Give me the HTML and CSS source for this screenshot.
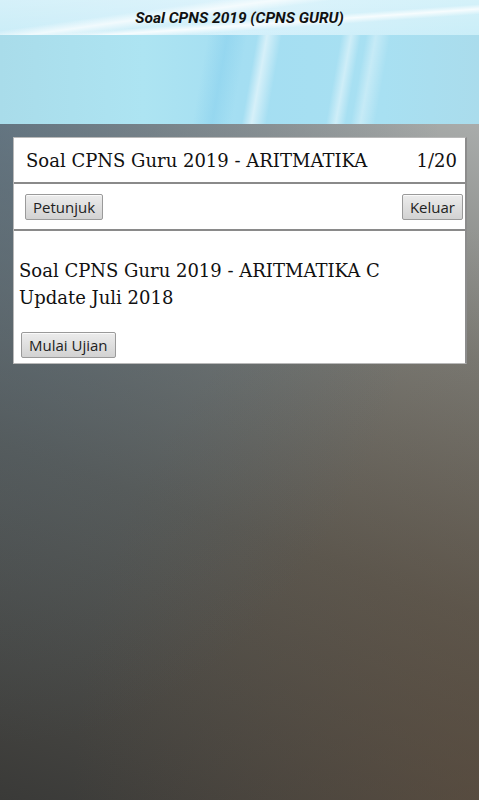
FILE: index.html
```html
<!DOCTYPE html>
<html lang="id">
<head>
  <meta charset="UTF-8" />
  <meta name="viewport" content="width=device-width, initial-scale=1.0"/>
  <title>Soal CPNS 2019 (CPNS GURU)</title>
  <link rel="stylesheet" href="styles.css">
</head>
<body>

  <div class="titlebar">
    <h1>Soal CPNS 2019 (CPNS GURU)</h1>
  </div>

  <div class="banner"></div>

  <div class="content">
    <div class="quiz-card">
      <div class="quiz-head">
        <span class="quiz-title">Soal CPNS Guru 2019 - ARITMATIKA</span>
        <span class="quiz-count">1/20</span>
      </div>

      <div class="quiz-tools">
        <button class="btn">Petunjuk</button>
        <button class="btn">Keluar</button>
      </div>

      <div class="quiz-body">
        <p class="quiz-desc">Soal CPNS Guru 2019 - ARITMATIKA C<br>Update Juli 2018</p>
        <button class="btn">Mulai Ujian</button>
      </div>
    </div>
  </div>

</body>
</html>
```

FILE: styles.css
```css
/* Reset + Font */
html, body {
  height: 100%;
}

body {
  margin: 0;
  display: flex;
  flex-direction: column;
  font-family: 'DejaVu Serif', serif;
  background: #4a4a48;
}

/* Top bar */
.titlebar {
  height: 35px;
  display: flex;
  align-items: center;
  justify-content: center;
  background:
    linear-gradient(172deg, transparent 30%, rgba(255, 255, 255, 0.7) 38%, transparent 46%),
    linear-gradient(176deg, transparent 55%, rgba(255, 255, 255, 0.8) 62%, transparent 70%),
    linear-gradient(178deg, rgba(255, 255, 255, 0.35), rgba(255, 255, 255, 0.1)),
    linear-gradient(90deg, #bfe9f6, #cdeefa 50%, #c4ecf7);
}

h1 {
  margin: 0;
  font-family: Roboto, sans-serif;
  font-style: italic;
  font-weight: bold;
  font-size: 15.5px;
  color: #111;
}

/* Light blue streaky band */
.banner {
  height: 89px;
  background:
    linear-gradient(100deg, transparent 52%, rgba(255, 255, 255, 0.55) 54%, transparent 57%),
    linear-gradient(100deg, transparent 69%, rgba(255, 255, 255, 0.45) 71%, transparent 73%),
    linear-gradient(100deg, transparent 74%, rgba(255, 255, 255, 0.35) 76%, transparent 79%),
    linear-gradient(100deg, transparent 42%, rgba(120, 200, 235, 0.35) 46%, transparent 50%),
    linear-gradient(90deg, #a9dcea, #ade4f2 30%, #a4def2 50%, #a8e0f2 80%, #aadcec);
}

.content {
  flex: 1;
  padding: 13px 12px 0 13px;
  background:
    radial-gradient(ellipse at 0 0, rgba(70, 100, 125, 0.55), transparent 65%),
    radial-gradient(ellipse at 100% 100%, rgba(100, 78, 58, 0.5), transparent 60%),
    linear-gradient(200deg, #a9acab 0%, #7b7c77 28%, #5a5953 58%, #3a3a38 100%);
}

.quiz-card {
  background: #fff;
  border: 1px solid #b9b9b9;
  border-right-width: 2px;
  border-right-color: #8c8c8c;
}

.quiz-head {
  height: 44px;
  display: flex;
  align-items: center;
  justify-content: space-between;
  padding: 0 8px 0 12px;
  font-size: 18px;
  color: #111;
  border-bottom: 2px solid #8a8a8a;
}

.quiz-tools {
  height: 45px;
  display: flex;
  align-items: center;
  justify-content: space-between;
  padding: 0 2px 0 11px;
  border-bottom: 2px solid #8a8a8a;
}

.quiz-body {
  padding: 26px 6px 5px 7px;
}

.quiz-desc {
  margin: 0 0 21px -2px;
  font-size: 18px;
  line-height: 27px;
  color: #111;
}

.btn {
  height: 26px;
  padding: 0 7px;
  font-family: 'Open Sans', sans-serif;
  font-size: 15px;
  color: #222;
  background: linear-gradient(#ececec, #d2d2d2);
  border: 1px solid #9a9a9a;
  border-radius: 2px;
  box-shadow: inset 0 1px 0 #fafafa;
}
```
